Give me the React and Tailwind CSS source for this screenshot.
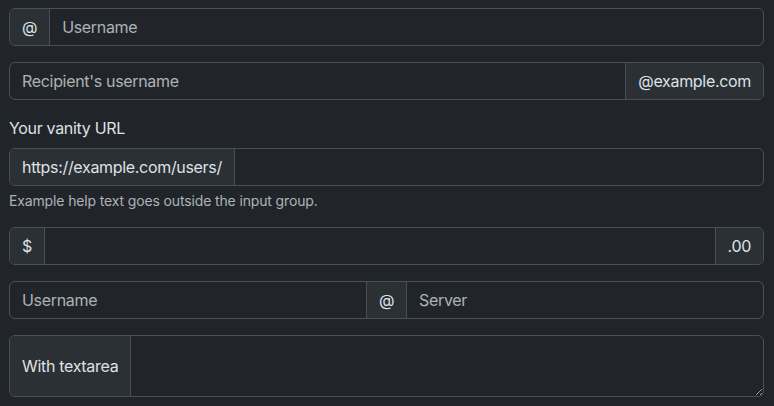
import React from "react";

// bootstrap-ish dark palette
const border = "border-[#495057]";
const addon =
	"flex items-center px-3 bg-[#2b3035] text-[#dee2e6] whitespace-nowrap";
const field =
	"flex-1 min-w-0 bg-transparent px-3 py-1.5 text-[#dee2e6] outline-none placeholder:text-[#dee2e6bf]";

const Group = ({ children, className = "" }) => (
	<div
		className={`flex border ${border} rounded-md overflow-hidden [&>*+*]:border-l [&>*+*]:border-[#495057] ${className}`}
	>
		{children}
	</div>
);

const App = () => {
	return (
		<div
			className="min-h-screen bg-[#212529] pl-[9px] pr-[10px] pt-2 text-base leading-6 tracking-[-0.02em] text-[#dee2e6] [color-scheme:dark]"
			style={{ fontFamily: "Inter, 'Noto Sans', sans-serif" }}
		>
			<Group className="mb-4">
				<span className={addon}>@</span>
				<input className={field} type="text" placeholder="Username" />
			</Group>

			<Group className="mb-4">
				<input
					className={field}
					type="text"
					placeholder="Recipient's username"
				/>
				<span className={addon}>@example.com</span>
			</Group>

			<label className="block mb-2">Your vanity URL</label>
			<Group>
				<span className={addon}>https://example.com/users/</span>
				<input className={field} type="text" />
			</Group>
			<div className="mt-1 mb-4 text-sm leading-[21px] tracking-[-0.01em] text-[#dee2e6bf]">
				Example help text goes outside the input group.
			</div>

			<Group className="mb-4">
				<span className={addon}>$</span>
				<input className={field} type="text" />
				<span className={addon}>.00</span>
			</Group>

			<Group className="mb-4">
				<input className={field} type="text" placeholder="Username" />
				<span className={addon}>@</span>
				<input className={field} type="text" placeholder="Server" />
			</Group>

			<Group>
				<span className={addon}>With textarea</span>
				<textarea
					className={`${field} h-[60px] resize-y`}
					rows={2}
				></textarea>
			</Group>
		</div>
	);
};

export default App;
